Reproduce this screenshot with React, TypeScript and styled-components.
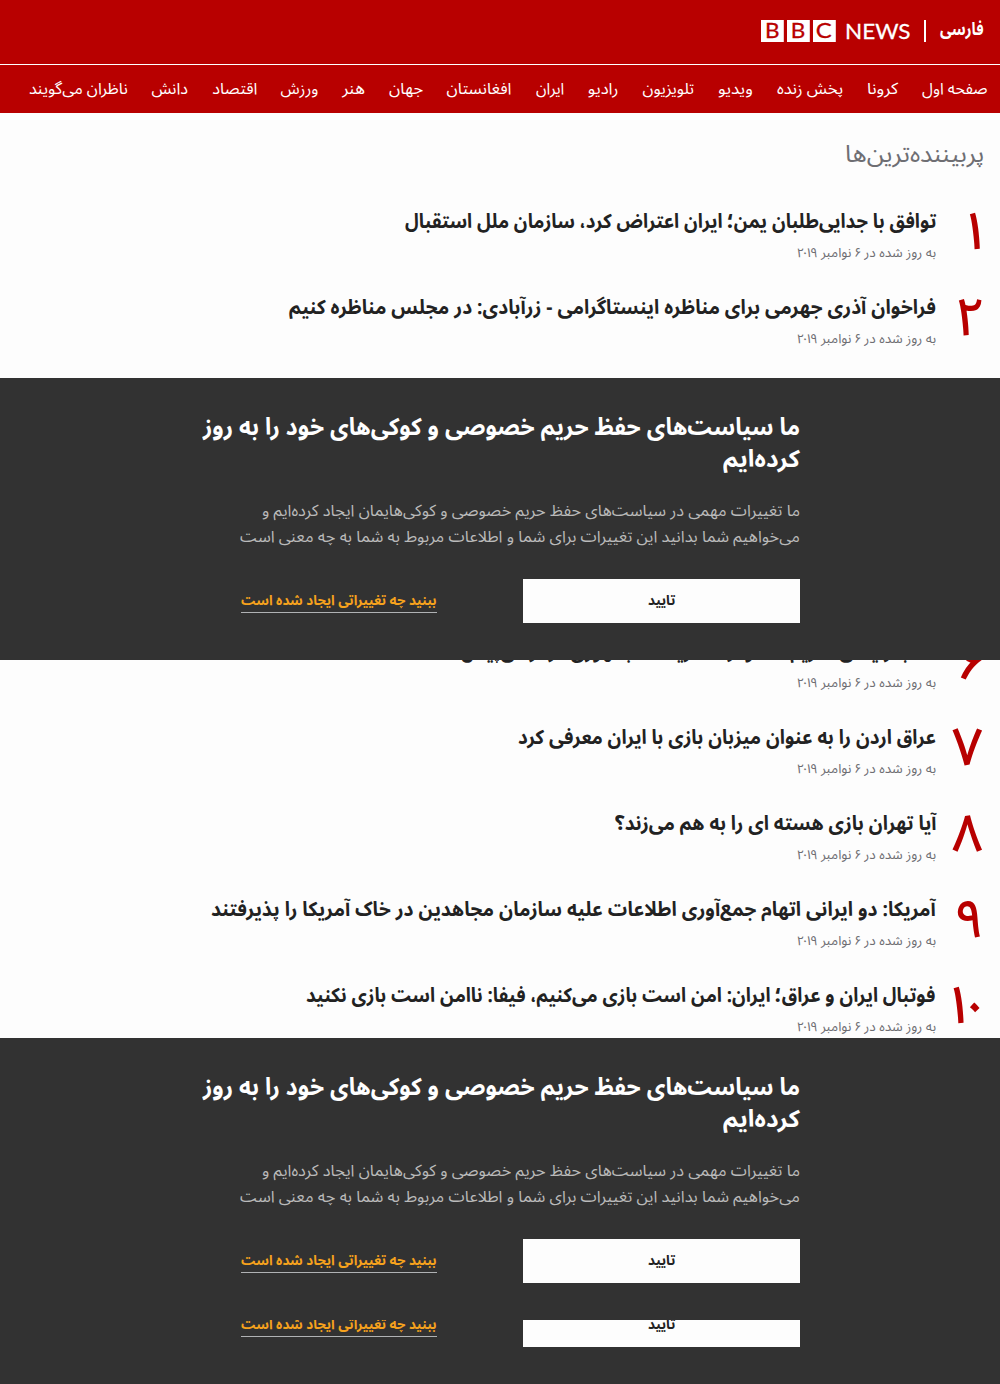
import React, { useLayoutEffect, useRef, useState } from "react";
import styled, { createGlobalStyle } from "styled-components";

const sans = `"Noto Sans Arabic UI", "Noto Sans Arabic", "Noto Sans", "DejaVu Sans", sans-serif`;

const GlobalStyle = createGlobalStyle`
  body { margin: 0; background: #fdfdfd; font-family: ${sans}; }
  h1, h2, h3, p, ul, ol { margin: 0; padding: 0; font-weight: inherit; font-size: inherit; }
  ul, ol { list-style: none; }
`;

const FitBox = styled.span<{ $width: number }>`
  display: block;
  width: ${(p) => p.$width}px;
  height: 100%;
  white-space: nowrap;
`;

const FitText = styled.span`
  display: inline-block;
  transform-origin: 100% 50%;
`;

function Fit({ width, children }: { width: number; children: string }) {
  const ref = useRef<HTMLSpanElement>(null);
  const [scale, setScale] = useState(1);
  useLayoutEffect(() => {
    if (ref.current) setScale(width / ref.current.offsetWidth);
  }, [width, children]);
  return (
    <FitBox $width={width}>
      <FitText ref={ref} style={{ transform: `scaleX(${scale})` }}>{children}</FitText>
    </FitBox>
  );
}

const Page = styled.div`
  direction: rtl;
  width: 1000px;
  height: 1384px;
  overflow: hidden;
  background: #fdfdfd;
`;

const Brand = styled.header`
  display: flex;
  height: 64px;
  padding: 20px 16px 0;
  box-sizing: border-box;
  background: #b80000;
`;

const Service = styled.div`
  height: 22px;
  line-height: 16px;
  font-size: 18px;
  font-weight: 700;
  color: #fff;
`;

const Divider = styled.div`
  width: 2px;
  height: 22px;
  margin: 0 14px 0 13px;
  background: #fff;
`;

const Logo = styled.svg`
  display: block;
  width: 151px;
  height: 22px;
  overflow: visible;
  direction: ltr;
  font-family: Lato, sans-serif;
`;

const Nav = styled.nav`
  height: 49px;
  box-sizing: border-box;
  border-top: 1px solid #fff;
  background: #b80000;
`;

const NavList = styled.ul`
  display: flex;
  gap: 24px;
  padding: 0 12px;
`;

const NavItem = styled.li`
  flex: none;
  height: 48px;
  line-height: 46px;
  font-size: 16px;
  color: #fff;
`;

const Heading = styled.h1`
  height: 44px;
  padding: 18px 16px 26px;
  line-height: 44px;
  font-size: 24px;
  color: #6e6e73;
`;

const Stories = styled.ol<{ $height: number; $tail?: boolean }>`
  display: flex;
  flex-direction: column;
  justify-content: ${(p) => (p.$tail ? "flex-end" : "flex-start")};
  height: ${(p) => p.$height}px;
  overflow: hidden;
`;

const Story = styled.li`
  display: flex;
  flex: none;
  height: 86px;
  padding: 0 16px;

  ${Stories} &:last-child {
    height: 63px;
  }
`;

const Rank = styled.span`
  width: 47px;
  height: 55px;
  padding-right: 1px;
  line-height: 55px;
  font-size: 53px;
  font-weight: 500;
  color: #b80000;
  white-space: nowrap;
`;

const StoryBody = styled.div`
  display: flex;
  flex-direction: column;
`;

const Title = styled.h3`
  height: 38px;
  line-height: 40px;
  font-size: 20px;
  font-weight: 700;
  color: #222;
`;

const Updated = styled.p`
  height: 26px;
  line-height: 26px;
  font-size: 13px;
  color: #6e6e73;
`;

const Banner = styled.section`
  height: 282px;
  padding: 32px 200px 0;
  box-sizing: border-box;
  background: #323232;
`;

const BannerTitle = styled.h2`
  height: 64px;
  margin-bottom: 23px;
  line-height: 32px;
  font-size: 24px;
  font-weight: 700;
  color: #fff;
`;

const BannerText = styled.div`
  height: 52px;
  margin-bottom: 30px;
  line-height: 26px;
  font-size: 16px;
  color: #bababa;
`;

const Line = styled.div<{ $height: number }>`
  height: ${(p) => p.$height}px;
`;

const Actions = styled.div`
  display: grid;
  grid-template-columns: 277px 277px;
  gap: 46px;
  height: 44px;
`;

const Accept = styled.button`
  display: flex;
  justify-content: center;
  height: 44px;
  padding: 0;
  border: 0;
  background: #fdfdfd;
  color: #222;
  font: 700 14px/42px ${sans};
`;

const More = styled.a`
  justify-self: center;
  height: 33px;
  border-bottom: 1px solid #b0b2b4;
  line-height: 42px;
  font-size: 14px;
  font-weight: 700;
  color: #f6a21d;
`;

const BannerTail = styled.section`
  display: flex;
  flex-direction: column;
  justify-content: flex-end;
  height: 27px;
  padding: 0 200px;
  overflow: hidden;
  background: #323232;
`;

const BannerFoot = styled.div`
  height: 37px;
  background: #323232;
`;

const navItems: [string, number][] = [
  ["صفحه اول", 66], ["کرونا", 31], ["پخش زنده", 66], ["ویدیو", 35], ["تلویزیون", 52],
  ["رادیو", 30.2], ["ایران", 28], ["افغانستان", 64.5], ["جهان", 34], ["هنر", 22.8],
  ["ورزش", 37.5], ["اقتصاد", 44.8], ["دانش", 36.5], ["ناظران می‌گویند", 99],
];

type StoryData = { rank: string; title: string; width: number };

const topStories: StoryData[] = [
  { rank: "۱", title: "توافق با جدایی‌طلبان یمن؛ ایران اعتراض کرد، سازمان ملل استقبال", width: 531 },
  { rank: "۲", title: "فراخوان آذری جهرمی برای مناظره اینستاگرامی - زرآبادی: در مجلس مناظره کنیم", width: 647 },
];

const moreStories: StoryData[] = [
  { rank: "۶", title: "کتاب رئیسی تحریم شد و از سد ریاست‌جمهوری فراتر می‌پیش", width: 475 },
  { rank: "۷", title: "عراق اردن را به عنوان میزبان بازی با ایران معرفی کرد", width: 418 },
  { rank: "۸", title: "آیا تهران بازی هسته ای را به هم می‌زند؟", width: 321 },
  { rank: "۹", title: "آمریکا: دو ایرانی اتهام جمع‌آوری اطلاعات علیه سازمان مجاهدین در خاک آمریکا را پذیرفتند", width: 725 },
  { rank: "۱۰", title: "فوتبال ایران و عراق؛ ایران: امن است بازی می‌کنیم، فیفا: ناامن است بازی نکنید", width: 630 },
];

function StoryRow({ rank, title, width }: StoryData) {
  return (
    <Story>
      <Rank>{rank}</Rank>
      <StoryBody>
        <Title><Fit width={width}>{title}</Fit></Title>
        <Updated><Fit width={139}>به روز شده در ۶ نوامبر ۲۰۱۹</Fit></Updated>
      </StoryBody>
    </Story>
  );
}

function BannerActions() {
  return (
    <Actions>
      <Accept><Fit width={27}>تایید</Fit></Accept>
      <More><Fit width={196}>ببنید چه تغییراتی ایجاد شده است</Fit></More>
    </Actions>
  );
}

function PrivacyBanner() {
  return (
    <Banner>
      <BannerTitle>
        <Line $height={32}><Fit width={597}>ما سیاست‌های حفظ حریم خصوصی و کوکی‌های خود را به روز</Fit></Line>
        <Line $height={32}><Fit width={77}>کرده‌ایم</Fit></Line>
      </BannerTitle>
      <BannerText>
        <Line $height={26}><Fit width={538}>ما تغییرات مهمی در سیاست‌های حفظ حریم خصوصی و کوکی‌هایمان ایجاد کرده‌ایم و</Fit></Line>
        <Line $height={26}><Fit width={560}>می‌خواهیم شما بدانید این تغییرات برای شما و اطلاعات مربوط به شما به چه معنی است</Fit></Line>
      </BannerText>
      <BannerActions />
    </Banner>
  );
}

export default function App() {
  return (
    <Page>
      <GlobalStyle />
      <Brand>
        <Service><Fit width={44}>فارسی</Fit></Service>
        <Divider />
        <Logo viewBox="0 0 151 22">
          <path fill="#fff" d="M1 0h22.800v22H1zM27 0h22.800v22H27zM53 0h22.800v22H53z" />
          <g fill="#b80000" stroke="#b80000" strokeWidth=".3" fontSize="21">
            <text x="5" y="18.400" textLength="14.500" lengthAdjust="spacingAndGlyphs">B</text>
            <text x="30.800" y="18.400" textLength="14.500" lengthAdjust="spacingAndGlyphs">B</text>
            <text x="55.700" y="18.400" textLength="16" lengthAdjust="spacingAndGlyphs">C</text>
          </g>
          <text x="85" y="18.600" fill="#fff" stroke="#fff" strokeWidth=".3" fontSize="22" textLength="65.500" lengthAdjust="spacingAndGlyphs">NEWS</text>
        </Logo>
      </Brand>
      <Nav>
        <NavList>
          {navItems.map(([label, width]) => (
            <NavItem key={label}><Fit width={width}>{label}</Fit></NavItem>
          ))}
        </NavList>
      </Nav>
      <Heading><Fit width={139}>پربیننده‌ترین‌ها</Fit></Heading>
      <Stories $height={177}>{topStories.map((s) => <StoryRow key={s.rank} {...s} />)}</Stories>
      <PrivacyBanner />
      <Stories $height={378} $tail>{moreStories.map((s) => <StoryRow key={s.rank} {...s} />)}</Stories>
      <PrivacyBanner />
      <BannerTail><BannerActions /></BannerTail>
      <BannerFoot />
    </Page>
  );
}
